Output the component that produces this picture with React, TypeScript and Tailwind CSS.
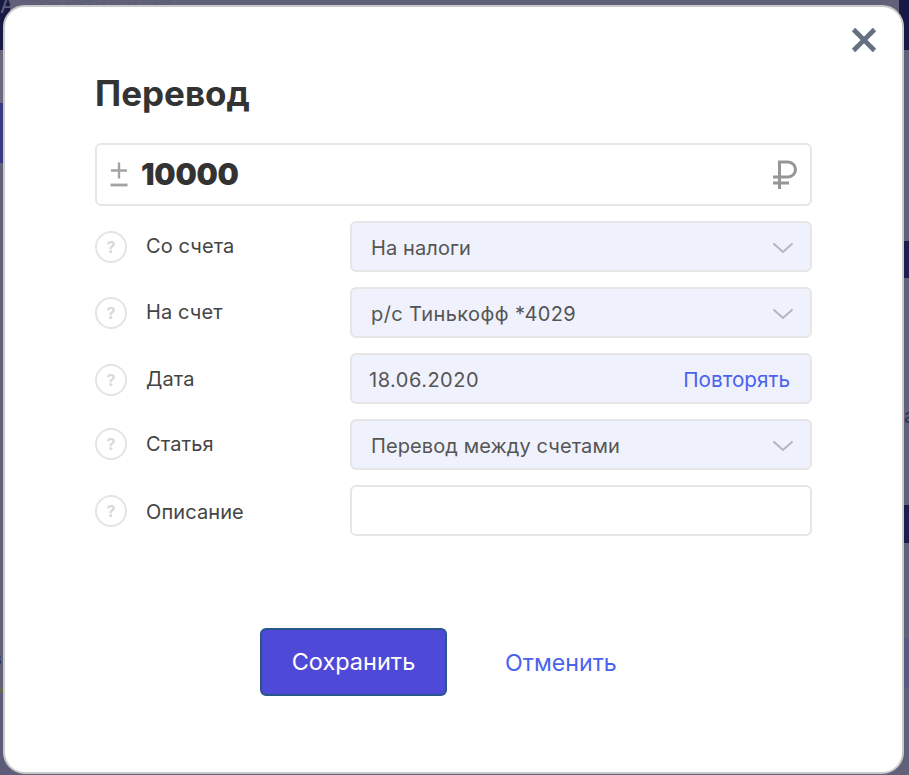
import React from "react";

const F = '"Inter", "Liberation Sans", sans-serif';

function Chevron() {
  return (
    <svg width="22" height="12" viewBox="0 0 22 12" fill="none" className="mt-[3px] shrink-0">
      <path d="M1.5 1.5 L11 10 L20.5 1.5" stroke="#b4b6bc" strokeWidth="2" />
    </svg>
  );
}

function Help({ className = "" }: { className?: string }) {
  return (
    <div className={"flex h-8 w-8 shrink-0 items-center justify-center rounded-full border-2 border-[#e4e4e4] text-[16px] font-bold text-[#d9d9d9] " + className}>
      ?
    </div>
  );
}

function Row({ label, children, labelClass = "", helpClass = "" }: { label: string; children: React.ReactNode; labelClass?: string; helpClass?: string }) {
  return (
    <div className="flex h-[51px] items-center">
      <Help className={helpClass} />
      <div className={"ml-[19px] w-[204px] text-[20px] leading-6 tracking-[0.1px] text-[#444444] " + labelClass}>{label}</div>
      {children}
    </div>
  );
}

function Select({ value, wide = false }: { value: string; wide?: boolean }) {
  return (
    <div className="flex h-[51px] w-[462px] items-center justify-between rounded-md border-2 border-[#e6e6e6] bg-[#eff1fc] pl-[19px] pr-[16px] text-[20px] tracking-[0.1px] text-[#555555]">
      <span className={wide ? "mt-[3px] tracking-[0.4px]" : "mt-[3px]"}>{value}</span>
      <Chevron />
    </div>
  );
}

export default function App() {
  return (
    <div className="relative h-[775px] w-[909px] overflow-hidden bg-[#62617a]" style={{ fontFamily: F }}>
      <div className="absolute inset-0 flex justify-between">
        <div className="flex w-[10px] flex-col">
          <div className="h-[50px] bg-[#1a1845]" />
          <div className="h-[53px] bg-[#6a6980]" />
          <div className="h-[60px] bg-[#3a3880]" />
          <div className="h-[525px] bg-[#62617a]" />
          <div className="h-[5px] bg-[#6b6650]" />
          <div className="flex-1 bg-[#5c5b78]" />
        </div>
        <div className="flex w-[10px] flex-col">
          <div className="h-[50px] bg-[#1a1845]" />
          <div className="h-[191px] bg-[#62617a]" />
          <div className="h-[37px] bg-[#1f1d50]" />
          <div className="h-[227px] bg-[#62617a]" />
          <div className="h-[38px] bg-[#1f1d50]" />
          <div className="h-[95px] bg-[#62617a]" />
          <div className="h-[50px] bg-[#5a5a80]" />
          <div className="flex-1 bg-[#62617a]" />
        </div>
      </div>
      <div className="absolute left-0 top-[-7px] text-[23px] leading-[24px] text-[#5f5e78]">Автоматизация</div>
      <div className="absolute left-[-8px] top-[646px] text-[20px] leading-6 text-[#2f2e52]">з</div>
      <div className="absolute left-[904px] top-[404px] text-[20px] leading-6 text-[#2f2e52]">а</div>

      <div className="absolute left-[3px] top-[5px] h-[769px] w-[901px] rounded-[22px] border-2 border-[#c9c9c9] bg-white pl-[90px] pr-[90px]">
        <button className="absolute right-[25px] top-[20px]">
          <svg width="26" height="26" viewBox="0 0 26 26" fill="none">
            <path d="M2.5 2.5 L23.5 23.5 M23.5 2.5 L2.5 23.5" stroke="#667080" strokeWidth="4.6" />
          </svg>
        </button>

        <h1 className="pt-[64px] text-[35px] font-bold leading-[44px] text-[#333333]">Перевод</h1>

        <div className="mt-[28px] flex h-[63px] w-[717px] items-center rounded-md border-2 border-[#e6e6e6] pl-[13px] pr-[12px]">
          <svg width="18" height="28" viewBox="0 0 18 28" fill="none" className="shrink-0">
            <path d="M9 1.5 V17.5 M1 9.5 H17" stroke="#a3a3a3" strokeWidth="2.4" />
            <path d="M0.5 24 H17.5" stroke="#a3a3a3" strokeWidth="2.8" />
          </svg>
          <span className="ml-[13px] flex-1 text-[30px] font-black tracking-[-0.25px] text-[#333333]">10000</span>
          <svg width="26" height="30" viewBox="0 0 26 30" fill="none" className="shrink-0">
            <path d="M7.5 29 V2 H16 A7.5 7.5 0 0 1 16 17 H1 M1 23 H17" stroke="#969696" strokeWidth="3" />
          </svg>
        </div>

        <div className="mt-[15px] flex flex-col gap-[15px]">
          <Row label="Со счета" labelClass="mb-[2px]"><Select value="На налоги" /></Row>
          <Row label="На счет" labelClass="mb-[2px]"><Select value="р/с Тинькофф *4029" wide /></Row>
          <Row label="Дата" helpClass="mt-[2px]">
            <div className="flex h-[51px] w-[462px] items-center justify-between rounded-md border-2 border-[#e6e6e6] bg-[#eff1fc] pl-[17px] pr-[20px] text-[20px] text-[#555555]">
              <span className="mt-[2px] tracking-[0.5px]">18.06.2020</span>
              <span className="mt-[3px] text-[20.7px] text-[#4a63ee]">Повторять</span>
            </div>
          </Row>
          <Row label="Статья" labelClass="mb-[2px]" helpClass="mb-[2px]"><Select value="Перевод между счетами" /></Row>
          <Row label="Описание" labelClass="mt-[2px]">
            <div className="h-[51px] w-[462px] rounded-md border-2 border-[#e6e6e6] bg-white" />
          </Row>
        </div>

        <div className="mt-[92px] flex items-center pl-[165px]">
          <button className="h-[68px] w-[187px] rounded-md border-2 border-[#27568a] bg-[#4f49d8] text-[23.5px] text-white">
            Сохранить
          </button>
          <span className="ml-[58px] mt-[2px] text-[23.2px] text-[#4a63ee]">Отменить</span>
        </div>
      </div>
    </div>
  );
}
